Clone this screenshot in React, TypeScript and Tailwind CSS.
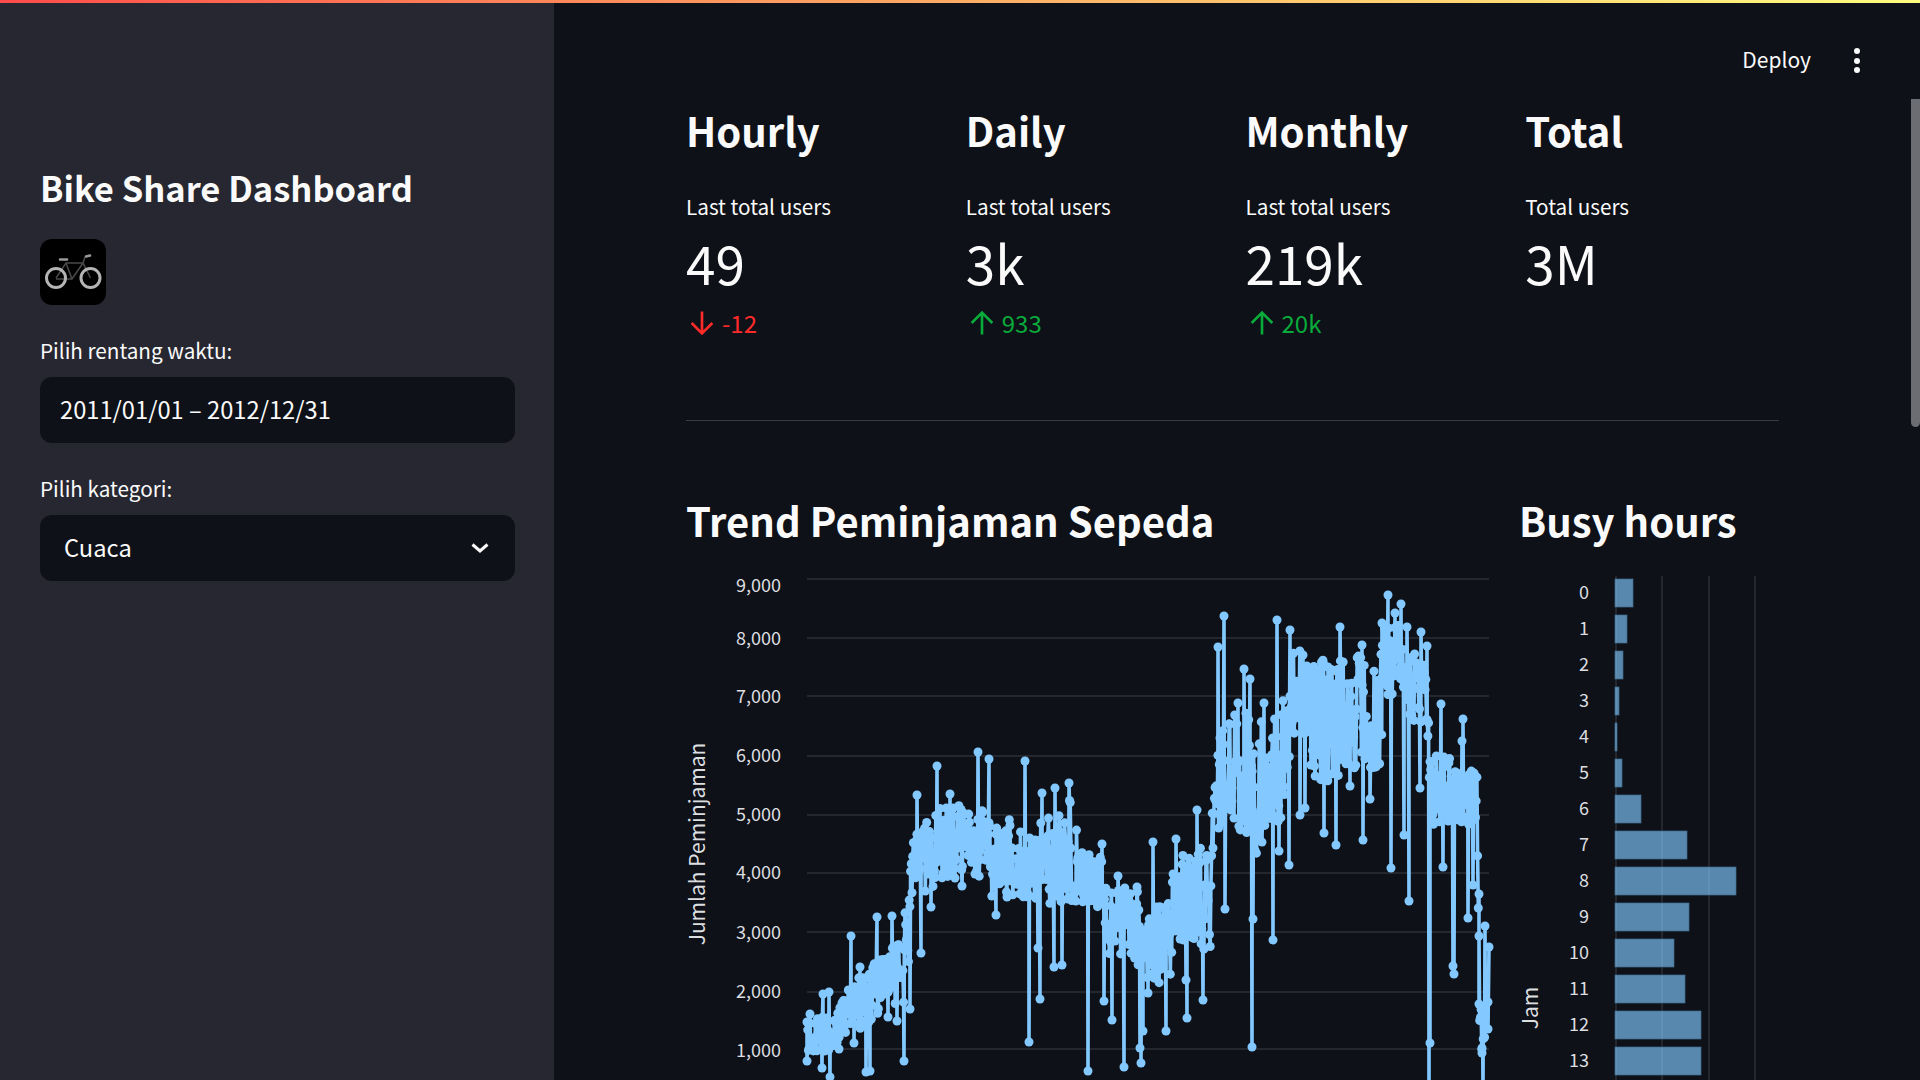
import { ReactNode } from 'react';

// pixel traces of the line chart: [x, y] in page coordinates
const spikes: [number, number][] = [
  [917, 795], [937, 766], [950, 794], [978, 752], [989, 759], [1025, 761], [1042, 793], [1055, 788],
  [877, 917], [892, 916], [851, 936], [860, 967], [829, 992], [823, 994], [810, 1014],
  [830, 1077], [866, 1072], [870, 1071], [904, 1061], [854, 1043], [839, 1049], [822, 1068], [807, 1061],
  [897, 1021], [888, 1017], [910, 1009], [921, 953], [931, 907], [962, 886], [955, 878], [947, 873],
  [996, 915], [1007, 897], [1029, 1042], [1040, 999], [1038, 948], [1054, 967], [1062, 965],
  [1069, 783], [1102, 844], [1118, 876], [1137, 887], [1153, 842], [1176, 839], [1197, 810], [1218, 647],
  [1224, 616], [1244, 669], [1250, 679], [1238, 703], [1264, 703], [1277, 620], [1290, 630], [1303, 655],
  [1328, 667], [1340, 627], [1362, 645], [1388, 595], [1401, 604], [1395, 613], [1407, 627], [1421, 632],
  [1427, 646], [1382, 623], [1441, 704], [1463, 719], [1462, 741], [1485, 926], [1489, 947],
  [1088, 1071], [1124, 1067], [1141, 1063], [1140, 1048], [1143, 1031], [1112, 1020], [1104, 1001],
  [1166, 1031], [1148, 993], [1187, 1018], [1203, 1000], [1186, 980], [1225, 909], [1252, 1047],
  [1273, 940], [1253, 919], [1289, 865], [1279, 851], [1300, 815], [1305, 808], [1324, 833], [1336, 845],
  [1363, 840], [1370, 799], [1350, 786], [1391, 868], [1409, 901], [1404, 835], [1420, 788], [1430, 1043],
  [1429, 1090], [1443, 867], [1453, 966], [1454, 974], [1468, 918], [1473, 885], [1479, 894], [1479, 1004],
  [1488, 1002], [1488, 1029], [1482, 1048], [1482, 1053], [1483, 1090],
];

// x, top, bottom of the dense band
const band: [number, number, number][] = [
  [807, 1022, 1056], [837, 1012, 1050], [850, 985, 1035], [870, 968, 1022], [885, 952, 1010], [903, 935, 1005],
  [907, 885, 995], [912, 835, 900], [925, 820, 893], [937, 808, 890], [955, 805, 875], [978, 805, 875],
  [990, 820, 897], [1033, 818, 897], [1050, 812, 905], [1070, 798, 912], [1083, 850, 905], [1103, 855, 912],
  [1108, 895, 955], [1117, 885, 955], [1137, 880, 960], [1142, 925, 985], [1147, 925, 985], [1152, 900, 985],
  [1170, 895, 985], [1175, 845, 935], [1183, 845, 945], [1210, 845, 955], [1214, 780, 875], [1220, 730, 825],
  [1233, 715, 830], [1250, 703, 835], [1256, 720, 860], [1263, 710, 845], [1287, 695, 815], [1291, 650, 745],
  [1307, 650, 745], [1312, 660, 785], [1337, 660, 785], [1345, 655, 770], [1380, 655, 770], [1384, 622, 700],
  [1400, 622, 700], [1405, 650, 725], [1427, 650, 725], [1431, 750, 825], [1453, 750, 825], [1458, 770, 825],
  [1477, 770, 825], [1480, 1000, 1056], [1487, 1000, 1056],
];

function bandAt(x: number): [number, number] {
  for (let i = 1; i < band.length; i++) {
    if (x <= band[i][0]) {
      const [x0, t0, b0] = band[i - 1];
      const [x1, t1, b1] = band[i];
      const k = (x - x0) / (x1 - x0);
      return [t0 + (t1 - t0) * k, b0 + (b1 - b0) * k];
    }
  }
  return [band[band.length - 1][1], band[band.length - 1][2]];
}

function buildSeries(): [number, number][] {
  let seed = 17;
  const rand = () => {
    seed = (seed * 16807) % 2147483647;
    return seed / 2147483647;
  };
  const pts: [number, number][] = [];
  for (let x = 807; x <= 1486; x += 0.7) {
    const [t, b] = bandAt(x);
    pts.push([x, t + (b - t) * rand()]);
  }
  return [...pts, ...spikes].sort((a, b) => a[0] - b[0]);
}

const series = buildSeries();

const yTicks = [
  { label: '9,000', grid: 579, text: 586 },
  { label: '8,000', grid: 638, text: 639 },
  { label: '7,000', grid: 696, text: 697 },
  { label: '6,000', grid: 756, text: 756 },
  { label: '5,000', grid: 815, text: 815 },
  { label: '4,000', grid: 873, text: 873 },
  { label: '3,000', grid: 932, text: 933 },
  { label: '2,000', grid: 992, text: 992 },
  { label: '1,000', grid: 1049, text: 1051 },
];

const busyHours = [18, 12, 8, 4, 2, 7, 26, 72, 121, 74, 59, 70, 86, 86];

function TrendChart() {
  return (
    <svg viewBox="686 546 814 534" className="block h-[534px] w-[814px] overflow-visible">
      {yTicks.map((t) => (
        <g key={t.label}>
          <line x1={807} x2={1489} y1={t.grid} y2={t.grid} stroke="#2d2f37" strokeWidth={1.5} />
          <text x={781} y={t.text} dy="0.35em" textAnchor="end" fontSize={18} fill="#dddee0">
            {t.label}
          </text>
        </g>
      ))}
      <text
        transform="translate(698 844) rotate(-90)"
        textAnchor="middle"
        dy="0.35em"
        fontSize={21}
        fill="#dddee0"
      >
        Jumlah Peminjaman
      </text>
      <polyline
        points={series.map((p) => p.join(',')).join(' ')}
        fill="none"
        stroke="#83c9ff"
        strokeWidth={3.6}
        strokeLinejoin="round"
      />
      {series.map((p, i) => (
        <circle key={i} cx={p[0]} cy={p[1]} r={4.5} fill="#83c9ff" />
      ))}
    </svg>
  );
}

function BusyChart() {
  return (
    <svg viewBox="1519 546 261 534" className="block h-[534px] w-[261px] overflow-visible">
      {[1616, 1662, 1709, 1755].map((x) => (
        <line key={x} x1={x} x2={x} y1={576} y2={1080} stroke="#2d2f37" strokeWidth={1.5} />
      ))}
      {busyHours.map((w, i) => (
        <g key={i}>
          <rect
            x={1615}
            y={579 + i * 36}
            width={w}
            height={28}
            fill="#83c9ff"
            fillOpacity={0.65}
            stroke="#3f6a8e"
            strokeWidth={0.7}
          />
          <text x={1589} y={593 + i * 36} dy="0.35em" textAnchor="end" fontSize={18} fill="#dddee0">
            {i}
          </text>
        </g>
      ))}
      <text
        transform="translate(1531 1008) rotate(-90)"
        textAnchor="middle"
        dy="0.35em"
        fontSize={21}
        fill="#dddee0"
      >
        Jam
      </text>
    </svg>
  );
}

function Arrow({ down }: { down?: boolean }) {
  return (
    <svg viewBox="0 0 22 22" className={down ? 'h-6 w-6 rotate-180' : 'h-6 w-6'} fill="none">
      <path d="M11 21.5V1.5M1.5 11 11 1.5 20.5 11" stroke="currentColor" strokeWidth={2.4} />
    </svg>
  );
}

function Metric({
  title,
  label,
  value,
  delta,
  down,
}: {
  title: string;
  label: string;
  value: string;
  delta?: string;
  down?: boolean;
}) {
  return (
    <div>
      <h2 className="text-[40px] font-semibold leading-[48px] text-[#fafafa]">{title}</h2>
      <p className="mt-[37px] text-[20.7px] leading-[30px] text-[#fafafa]">{label}</p>
      <p className="mt-[5px] text-[53px] leading-[72px] text-[#fafafa]">{value}</p>
      {delta && (
        <div
          className={
            down
              ? 'mt-[9px] flex h-8 items-center gap-2 pl-1 text-[24px] text-[#ff2b2b]'
              : 'mt-[9px] flex h-8 items-center gap-2 pl-1 text-[24px] text-[#09ab3b]'
          }
        >
          <Arrow down={down} />
          <span>{delta}</span>
        </div>
      )}
    </div>
  );
}

function Field({ label, children }: { label: string; children: ReactNode }) {
  return (
    <div className="mt-[31px]">
      <p className="-translate-y-px text-[20.7px] leading-[30px] text-[#fafafa]">{label}</p>
      <div className="mt-[11px] flex h-[66px] items-center justify-between rounded-xl bg-[#0e1117] text-[23.7px] text-[#fafafa]">
        {children}
      </div>
    </div>
  );
}

function BikeLogo() {
  return (
    <svg viewBox="0 0 66 66" className="h-[66px] w-[66px] rounded-xl bg-black" fill="none">
      <path d="M16 39 26 24h17l-11 16H16M26 24l6 16M43 24l7.5 15M43 24l2-6" stroke="#484848" strokeWidth="1.6" />
      <circle cx="16" cy="39" r="9.5" stroke="#b4b4b4" strokeWidth="3" />
      <circle cx="50.5" cy="39" r="9.5" stroke="#b4b4b4" strokeWidth="3" />
      <path d="M20 20.5h7M46 17.5l4-1" stroke="#9a9a9a" strokeWidth="2.6" strokeLinecap="round" />
    </svg>
  );
}

export default function App() {
  return (
    <div className="relative flex h-screen flex-col overflow-hidden bg-[#0e1117] font-['Noto_Sans_CJK_SC','Liberation_Sans',sans-serif] text-[#fafafa]">
      <div className="h-[3px] shrink-0 bg-gradient-to-r from-[#ff4b4b] to-[#fffd80]" />

      <div className="flex min-h-0 flex-1">
        <aside className="w-[554px] shrink-0 bg-[#262730] pl-10 pr-[39px] pt-[160px]">
          <h2 className="text-[34.5px] font-semibold leading-[48px]">Bike Share Dashboard</h2>
          <div className="mt-7">
            <BikeLogo />
          </div>
          <Field label="Pilih rentang waktu:">
            <span className="pl-5">2011/01/01 – 2012/12/31</span>
          </Field>
          <Field label="Pilih kategori:">
            <span className="pl-6">Cuaca</span>
            <svg viewBox="0 0 18 10" className="mr-[26px] h-[10px] w-[18px]" fill="none">
              <path d="M1.5 1.5 9 8l7.5-6.5" stroke="#fafafa" strokeWidth="3" />
            </svg>
          </Field>
        </aside>

        <main className="min-w-0 flex-1">
          <header className="flex h-[103px] items-start justify-end pr-[60px] pt-10">
            <span className="text-[21px] leading-[32px]">Deploy</span>
            <div className="ml-[43px] mt-[5px] flex flex-col gap-[3.5px]">
              <span className="h-[6px] w-[6px] rounded-full bg-[#fafafa]" />
              <span className="h-[6px] w-[6px] rounded-full bg-[#fafafa]" />
              <span className="h-[6px] w-[6px] rounded-full bg-[#fafafa]" />
            </div>
          </header>

          <div className="pl-[132px]">
            <div className="grid w-[1119px] grid-cols-4">
              <Metric title="Hourly" label="Last total users" value="49" delta="-12" down />
              <Metric title="Daily" label="Last total users" value="3k" delta="933" />
              <Metric title="Monthly" label="Last total users" value="219k" delta="20k" />
              <Metric title="Total" label="Total users" value="3M" />
            </div>

            <div className="mt-[81px] h-px w-[1093px] bg-[#3a3b42]" />

            <div className="mt-[75px] flex gap-[19px]">
              <section className="w-[814px]">
                <h2 className="text-[40px] font-semibold leading-[48px]">Trend Peminjaman Sepeda</h2>
                <div className="mt-0.5">
                  <TrendChart />
                </div>
              </section>
              <section className="w-[261px]">
                <h2 className="text-[40px] font-semibold leading-[48px]">Busy hours</h2>
                <div className="mt-0.5">
                  <BusyChart />
                </div>
              </section>
            </div>
          </div>
        </main>
      </div>

      <div className="absolute right-0 top-[99px] h-[328px] w-[9px] rounded-b-md bg-[#6b6d72]" />
    </div>
  );
}
